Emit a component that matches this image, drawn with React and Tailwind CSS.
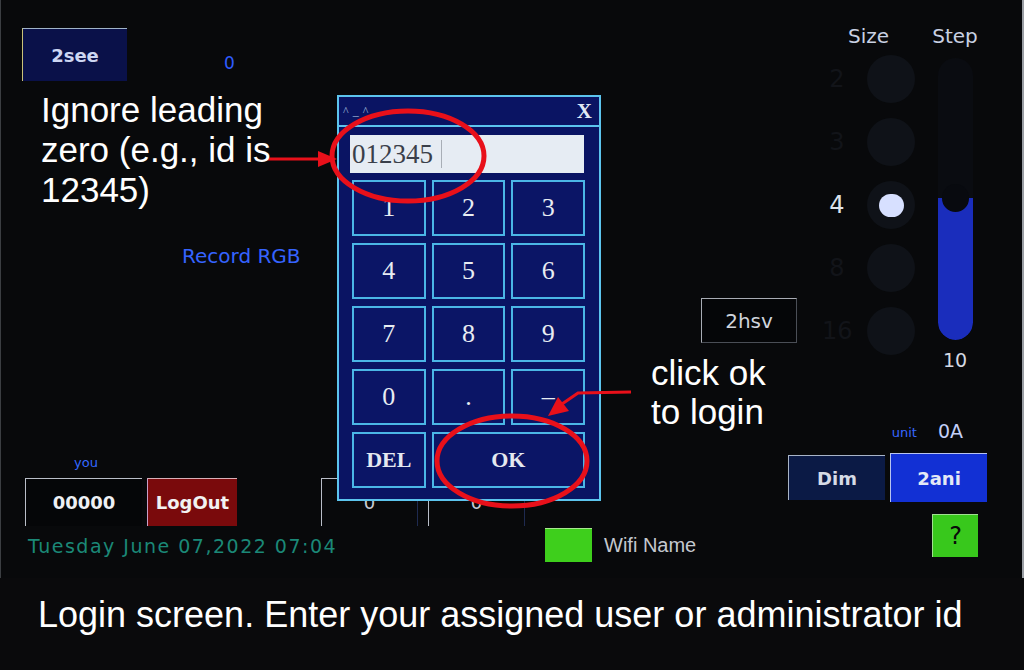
export default function App() {
  const sizes = [
    { l: "2", sel: false },
    { l: "3", sel: false },
    { l: "4", sel: true },
    { l: "8", sel: false },
    { l: "16", sel: false },
  ];
  const keys = ["1", "2", "3", "4", "5", "6", "7", "8", "9", "0", ".", "–"];
  return (
    <div className="relative flex h-[670px] w-[1024px] flex-col overflow-hidden bg-[#08090b]">
      {/* device screen */}
      <div className="flex h-[578px] border-l border-r-2 border-l-[#3b3e42] border-r-[#9a9ea4] font-['DejaVu_Sans',sans-serif]">
        {/* left column */}
        <div className="flex w-[539px] flex-col">
          <div className="ml-[21px] mt-[28px] flex items-start">
            <div className="flex h-[53px] w-[105px] items-center justify-center border-l border-t border-l-[#c9c27a] border-t-[#9fb3c8] bg-[#0a1149] text-[18px] font-bold text-[#cdd6f2]">
              2see
            </div>
            <span className="ml-[97px] mt-[27px] text-[17px] leading-none text-[#2f5cff]">0</span>
          </div>
          <div className="ml-[181px] mt-[165px] text-[20px] leading-none text-[#3563ff]">Record RGB</div>
          <div className="mt-auto flex flex-col pb-[22px]">
            <div className="ml-[73px] text-[13px] leading-none text-[#3468ff]">you</div>
            <div className="mt-[9px] flex">
              <div className="ml-[24px] flex h-[48px] w-[117px] items-center justify-center border-l border-t border-[#b9bec8] bg-[#050608] text-[18px] font-bold text-[#eef0f4]">
                00000
              </div>
              <div className="ml-[5px] flex h-[48px] w-[90px] items-center justify-center border-l border-t border-l-[#c8a0c8] border-t-[#d8b0b8] bg-[#7a0a0c] text-[18px] font-bold text-[#f2f2f2]">
                LogOut
              </div>
              <div className="ml-[84px] flex h-[48px] w-[97px] items-center justify-center border-l border-t border-r border-l-[#b9bec8] border-t-[#b9bec8] border-r-[#1e2a50] text-[18px] text-[#c8ccd4]">
                0
              </div>
              <div className="ml-[10px] flex h-[48px] w-[97px] items-center justify-center border-l border-t border-r border-l-[#b9bec8] border-t-[#b9bec8] border-r-[#1e2a50] text-[18px] text-[#c8ccd4]">
                0
              </div>
            </div>
            <div className="ml-[27px] mt-[11px] text-[19px] leading-none tracking-[1.5px] text-[#1b8877]">
              Tuesday June 07,2022 07:04
            </div>
          </div>
        </div>

        {/* right column */}
        <div className="flex flex-1 flex-col">
          <div className="flex items-start">
            <div className="ml-[161px] mt-[298px] flex h-[45px] w-[96px] items-center justify-center border border-l-[#a8acb4] border-t-[#a8acb4] border-r-[#4a4e56] border-b-[#4a4e56] bg-[#050608] text-[20px] text-[#d0d4dc]">
              2hsv
            </div>
            <div className="ml-[25px] mt-[26px] flex">
              <div className="flex w-[93px] flex-col items-center">
                <div className="text-[20px] leading-none text-[#c9d1e3]">Size</div>
                <div className="mt-[9px] flex flex-col gap-[15px]">
                  {sizes.map((s) => (
                    <div key={s.l} className="flex items-center">
                      <span
                        className={
                          s.sel
                            ? "w-[30px] text-center text-[24px] leading-none text-[#dde2ea]"
                            : "w-[30px] text-center text-[24px] leading-none text-[#121419]"
                        }
                      >
                        {s.l}
                      </span>
                      <div className="ml-[15px] flex h-[48px] w-[48px] items-center justify-center rounded-full bg-[#0f1218]">
                        {s.sel && <div className="h-[23px] w-[25px] rounded-full bg-[#d7e0ff]" />}
                      </div>
                    </div>
                  ))}
                </div>
              </div>
              <div className="ml-[14px] flex w-[52px] flex-col items-center">
                <div className="text-[20px] leading-none text-[#c9d1e3]">Step</div>
                <div className="relative mt-[12px] flex h-[282px] w-[35px] flex-col justify-end overflow-hidden rounded-full bg-[#0a0c11]">
                  <div className="h-[142px] w-full rounded-b-full bg-[#1a2dbc]" />
                  <div className="absolute bottom-[128px] left-[4px] h-[28px] w-[27px] rounded-full bg-[#080a0f]" />
                </div>
                <div className="mt-[11px] text-[19px] leading-none text-[#d4d8e2]">10</div>
              </div>
            </div>
          </div>

          <div className="mt-auto flex items-end">
            <div className="mb-[16px] ml-[5px] flex items-center">
              <div className="h-[34px] w-[47px] border-t border-t-[#a8e890] bg-[#3ecf1c]" />
              <span className="ml-[12px] font-['Liberation_Sans',sans-serif] text-[20px] leading-none text-[#c4c8cf]">
                Wifi Name
              </span>
            </div>
            <div className="ml-auto mr-[35px] flex flex-col pb-[21px]">
              <div className="flex items-end justify-end pr-[24px]">
                <span className="mb-[2px] text-[13px] leading-none text-[#3766ff]">unit</span>
                <span className="ml-[21px] text-[19px] leading-none text-[#c3cff8]">0A</span>
              </div>
              <div className="mt-[12px] flex items-center">
                <div className="flex h-[45px] w-[97px] items-center justify-center border-l border-t border-l-[#a8b4c8] border-t-[#a8b4c8] bg-[#0b1a45] text-[18px] font-bold text-[#d6dbe6]">
                  Dim
                </div>
                <div className="ml-[5px] flex h-[49px] w-[97px] items-center justify-center border-l border-t border-l-[#b8c4f0] border-t-[#b8c4f0] bg-[#1230d4] text-[18px] font-bold text-[#e4e8f6]">
                  2ani
                </div>
              </div>
              <div className="mr-[9px] mt-[12px] flex h-[43px] w-[46px] items-center justify-center self-end border-l border-t border-l-[#a0e090] border-t-[#a0e090] bg-[#38c81c] text-[24px] leading-none text-[#0a0a0a]">
                ?
              </div>
            </div>
          </div>
        </div>
      </div>

      {/* caption */}
      <div className="flex-1 bg-[#0a0a0c] pl-[38px] pt-[19px] font-['Liberation_Sans',Arial,sans-serif] text-[36px] leading-none text-white">
        Login screen. Enter your assigned user or administrator id
      </div>

      {/* keypad dialog overlay */}
      <div className="absolute left-[337px] top-[95px] flex h-[406px] w-[264px] flex-col border-2 border-[#5cc4ee] bg-[#0a1463] font-['Liberation_Serif',serif]">
        <div className="flex h-[30px] items-center justify-between border-b-2 border-[#5cc4ee] pl-[4px] pr-[7px]">
          <span className="text-[12px] leading-none tracking-[4px] text-[#9fb4d8]">^_^</span>
          <span className="text-[21px] font-bold leading-none text-[#dfe8f4]">X</span>
        </div>
        <div className="ml-[11px] mt-[8px] flex h-[38px] w-[234px] items-center bg-[#e6ecf3]">
          <span className="pl-[2px] text-[27px] leading-none text-[#3a3f4a]">012345</span>
          <span className="ml-[8px] h-[28px] w-px bg-[#a8aeb6]" />
        </div>
        <div className="ml-[13px] mt-[7px] grid w-[233px] grid-cols-3 gap-x-[6px] gap-y-[7px]">
          {keys.map((k) => (
            <div
              key={k}
              className="flex h-[56px] items-center justify-center border-2 border-[#4bb6e6] bg-[#0b1566] text-[26px] leading-none text-[#e8ecf2]"
            >
              {k}
            </div>
          ))}
          <div className="flex h-[56px] items-center justify-center border-2 border-[#4bb6e6] bg-[#0b1566] text-[22px] font-bold leading-none text-[#e4e8f0]">
            DEL
          </div>
          <div className="col-span-2 flex h-[56px] items-center justify-center border-2 border-[#4bb6e6] bg-[#0b1566] text-[22px] font-bold leading-none text-[#e4e8f0]">
            OK
          </div>
        </div>
      </div>

      {/* annotations */}
      <svg className="pointer-events-none absolute left-0 top-0" width="1024" height="670" viewBox="0 0 1024 670">
        <ellipse cx="408" cy="156" rx="76" ry="45" fill="none" stroke="#e8101a" strokeWidth="5" />
        <ellipse cx="512" cy="461" rx="75" ry="45" fill="none" stroke="#e8101a" strokeWidth="5" />
        <line x1="268" y1="159" x2="322" y2="159" stroke="#e8101a" strokeWidth="3" />
        <polygon points="318,151 337,159 318,167" fill="#e8101a" />
        <polyline points="631,392 578,393 562,404" fill="none" stroke="#e8101a" strokeWidth="3" />
        <polygon points="548,416 558,397 569,411" fill="#e8101a" />
      </svg>
      <div className="absolute left-[41px] top-[90px] font-['Liberation_Sans',Arial,sans-serif] text-[35px] leading-[40px] text-white">
        <div>Ignore leading</div>
        <div>zero (e.g., id is</div>
        <div>12345)</div>
      </div>
      <div className="absolute left-[651px] top-[353px] font-['Liberation_Sans',Arial,sans-serif] text-[35px] leading-[39px] text-white">
        <div>click ok</div>
        <div>to login</div>
      </div>
    </div>
  );
}
